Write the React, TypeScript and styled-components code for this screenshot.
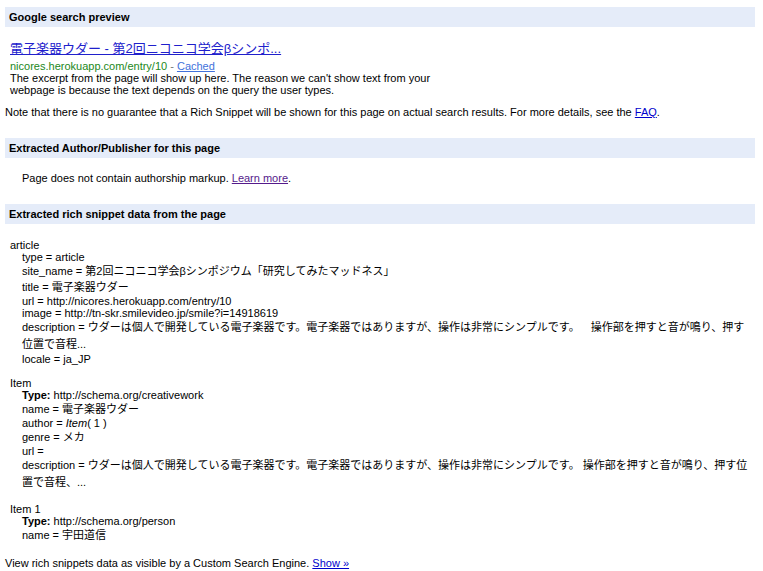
import React from 'react';
import styled, { createGlobalStyle, css } from 'styled-components';

const GlobalStyle = createGlobalStyle`
  body {
    margin: 0;
    background: #ffffff;
    color: #000000;
    font-family: "Liberation Sans", Arial, "Noto Sans CJK JP", sans-serif;
    font-size: 11px;
    text-spacing-trim: space-all;
  }
`;

type Prop = { name: string; value: React.ReactNode; bold?: boolean; tall?: boolean; wrap?: boolean };

interface Item {
  id: string;
  props: Prop[];
}

const items: Item[] = [
  {
    id: 'article',
    props: [
      { name: 'type', value: 'article' },
      { name: 'site_name', value: '第2回ニコニコ学会βシンポジウム「研究してみたマッドネス」', tall: true },
      { name: 'title', value: '電子楽器ウダー', tall: true },
      { name: 'url', value: 'http://nicores.herokuapp.com/entry/10' },
      { name: 'image', value: 'http://tn-skr.smilevideo.jp/smile?i=14918619' },
      {
        name: 'description',
        value:
          'ウダーは個人で開発している電子楽器です。電子楽器ではありますが、操作は非常にシンプルです。\u3000操作部を押すと音が鳴り、押す位置で音程...',
        wrap: true,
      },
      { name: 'locale', value: 'ja_JP' },
    ],
  },
  {
    id: 'Item',
    props: [
      { name: 'Type', value: 'http://schema.org/creativework', bold: true },
      { name: 'name', value: '電子楽器ウダー', tall: true },
      {
        name: 'author',
        value: (
          <>
            <em>Item</em>( 1 )
          </>
        ),
      },
      { name: 'genre', value: 'メカ', tall: true },
      { name: 'url', value: '' },
      {
        name: 'description',
        value:
          'ウダーは個人で開発している電子楽器です。電子楽器ではありますが、操作は非常にシンプルです。 操作部を押すと音が鳴り、押す位置で音程、...',
        wrap: true,
      },
    ],
  },
  {
    id: 'Item 1',
    props: [
      { name: 'Type', value: 'http://schema.org/person', bold: true },
      { name: 'name', value: '宇田道信', tall: true },
    ],
  },
];

const renderProp = (p: Prop) => {
  if (p.bold) {
    return (
      <>
        <Label>{p.name}:</Label> {p.value}
      </>
    );
  }
  if (typeof p.value === 'string') return `${p.name} = ${p.value}`;
  return (
    <>
      {`${p.name} = `}
      {p.value}
    </>
  );
};

export default function App() {
  return (
    <>
      <GlobalStyle />
      <Page>
        <SectionBar>Google search preview</SectionBar>
        <Preview>
          <ResultTitle href="#">電子楽器ウダー - 第2回ニコニコ学会βシンポ...</ResultTitle>
          <ResultUrl>
            nicores.herokuapp.com/entry/10<Dash> - </Dash>
            <TextLink tone="cached" href="#">
              Cached
            </TextLink>
          </ResultUrl>
          <Excerpt>
            The excerpt from the page will show up here. The reason we can't show text from your
            <br />
            webpage is because the text depends on the query the user types.
          </Excerpt>
        </Preview>
        <Note>
          Note that there is no guarantee that a Rich Snippet will be shown for this page on actual
          search results. For more details, see the{' '}
          <TextLink tone="plain" href="#">
            FAQ
          </TextLink>
          .
        </Note>

        <SectionBar spaced>Extracted Author/Publisher for this page</SectionBar>
        <AuthorNote>
          Page does not contain authorship markup.{' '}
          <TextLink tone="visited" href="#">
            Learn more
          </TextLink>
          .
        </AuthorNote>

        <SectionBar spaced>Extracted rich snippet data from the page</SectionBar>
        <DataBlock>
          {items.map((item) => (
            <ItemGroup key={item.id}>
              <ItemName>{item.id}</ItemName>
              <PropList>
                {item.props.map((p, i) => (
                  <PropLine key={i} $height={p.wrap ? 17 : p.tall ? 16 : 12}>
                    {renderProp(p)}
                  </PropLine>
                ))}
              </PropList>
            </ItemGroup>
          ))}
        </DataBlock>

        <Footer>
          View rich snippets data as visible by a Custom Search Engine.{' '}
          <TextLink tone="plain" href="#">
            Show »
          </TextLink>
        </Footer>
      </Page>
    </>
  );
}

const Page = styled.div`
  width: 750px;
  padding: 7px 8px 0 5px;
`;

const SectionBar = styled.div<{ spaced?: boolean }>`
  height: 20px;
  line-height: 20px;
  padding-left: 4px;
  background: #e5ecf9;
  font-weight: bold;
  font-size: 11px;
  ${({ spaced }) =>
    spaced &&
    css`
      margin-top: 20px;
    `}
`;

const Preview = styled.div`
  padding: 12px 0 0 5px;
`;

const ResultTitle = styled.a`
  display: block;
  font-size: 13px;
  line-height: 20px;
  color: #2020cc;
  text-decoration: underline;
`;

const ResultUrl = styled.div`
  margin-top: 1px;
  line-height: 12px;
  color: #228822;
`;

const Dash = styled.span`
  color: #777777;
`;

const TextLink = styled.a<{ tone: 'plain' | 'cached' | 'visited' }>`
  text-decoration: underline;
  color: ${({ tone }) =>
    tone === 'cached' ? '#4272db' : tone === 'visited' ? '#551a8b' : '#0000cc'};
`;

const Excerpt = styled.div`
  line-height: 12px;
`;

const Note = styled.div`
  margin-top: 10px;
  line-height: 12px;
`;

const AuthorNote = styled.div`
  margin-top: 14px;
  padding-left: 17px;
  line-height: 12px;
`;

const DataBlock = styled.div`
  margin-top: 15px;
  padding-left: 5px;
  display: flex;
  flex-direction: column;
  gap: 12px;
`;

const ItemGroup = styled.div`
  display: flex;
  flex-direction: column;
`;

const ItemName = styled.div`
  line-height: 12px;
`;

const PropList = styled.div`
  padding-left: 12px;
`;

const PropLine = styled.div<{ $height: number }>`
  line-height: ${({ $height }) => $height}px;
`;

const Label = styled.b`
  font-weight: bold;
`;

const Footer = styled.div`
  margin-top: 14px;
  line-height: 12px;
`;
